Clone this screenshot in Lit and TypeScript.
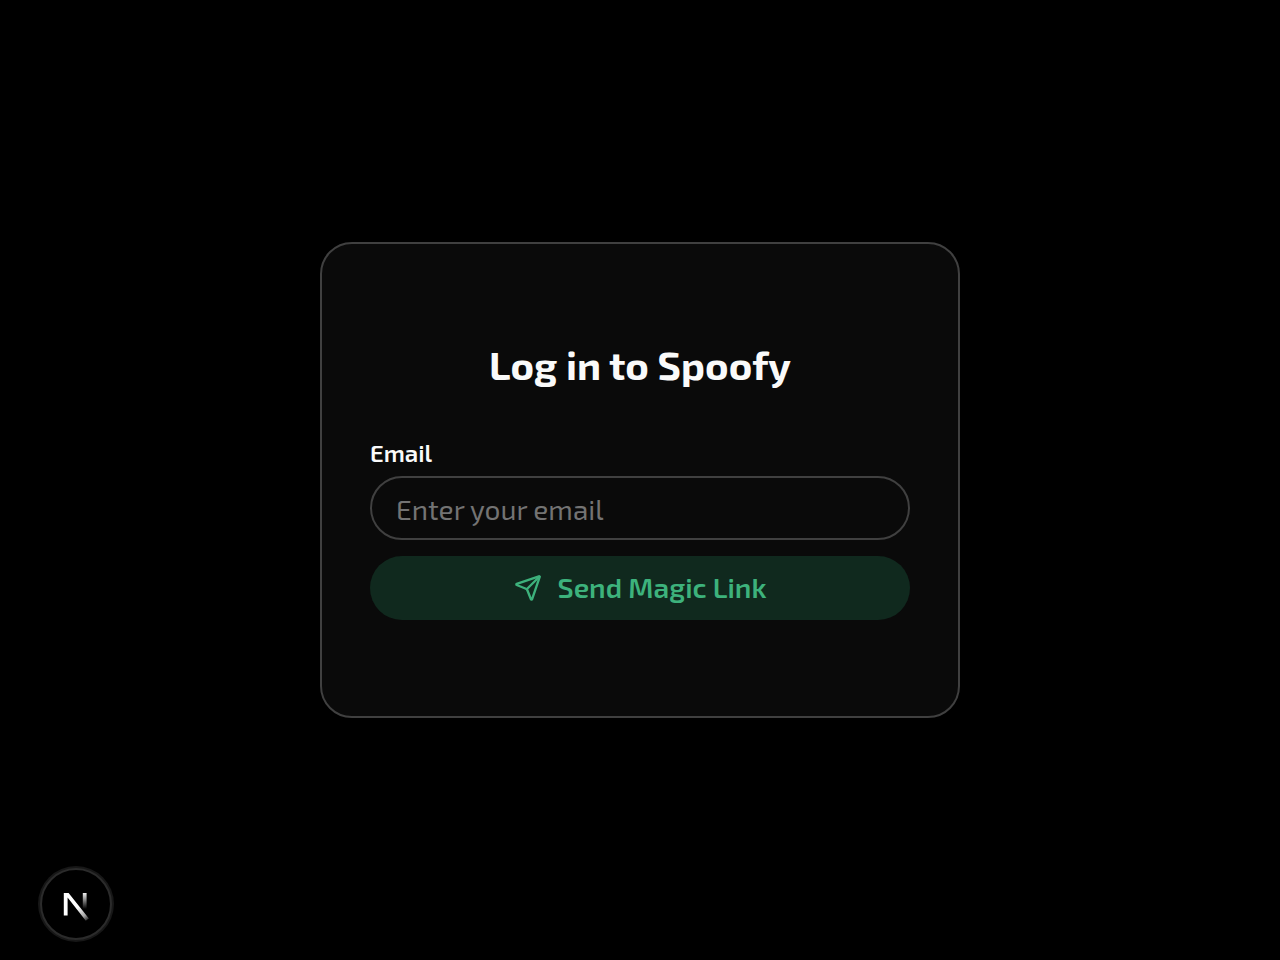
import { LitElement, html, css } from "lit";
import { customElement } from "lit/decorators.js";

@customElement("app-root")
export class AppRoot extends LitElement {
  static styles = css`
    :host {
      display: flex;
      align-items: center;
      justify-content: center;
      min-height: 100vh;
      background: #000;
      color: #fafafa;
      font-family: "Exo 2", "Noto Sans", sans-serif;
    }
    * {
      box-sizing: border-box;
    }
    .card {
      width: 100%;
      max-width: 640px;
      padding: 96px 48px;
      border: 2px solid #404040;
      border-radius: 32px;
      background: #0a0a0a;
    }
    .title {
      margin: 0 0 52px;
      font-size: 40px;
      line-height: 48px;
      font-weight: 700;
      text-align: center;
    }
    .form {
      display: flex;
      flex-direction: column;
      gap: 16px;
    }
    .field {
      display: flex;
      flex-direction: column;
      gap: 10px;
    }
    .label {
      font-size: 24px;
      line-height: 26px;
      font-weight: 600;
    }
    .input,
    .submit {
      width: 100%;
      height: 64px;
      border-radius: 32px;
      font-family: inherit;
      font-size: 28px;
    }
    .input {
      padding: 2px 24px 0;
      border: 2px solid #404040;
      background: transparent;
      color: #fafafa;
    }
    .input::placeholder {
      color: #737373;
      opacity: 1;
    }
    .submit {
      display: flex;
      align-items: center;
      justify-content: center;
      gap: 16px;
      padding: 0 24px;
      border: 0;
      background: #10291e;
      color: #3db27c;
      font-weight: 600;
      line-height: 32px;
      cursor: pointer;
    }
    .submit-text {
      padding-bottom: 2px;
    }
    .send {
      width: 28px;
      height: 28px;
    }
    .badge {
      position: fixed;
      left: 40px;
      bottom: 20px;
      width: 72px;
      height: 72px;
      padding: 0;
      border: 2px solid #2b2b2b;
      border-radius: 50%;
      background: #000;
      box-shadow: 0 0 0 2px #171717;
      cursor: pointer;
    }
    .mark {
      display: block;
      width: 68px;
      height: 68px;
    }
  `;

  render() {
    return html`
      <main class="card">
        <h1 class="title">Log in to Spoofy</h1>
        <form class="form" @submit=${(e: Event) => e.preventDefault()}>
          <div class="field">
            <label class="label" for="email">Email</label>
            <input class="input" id="email" type="email" placeholder="Enter your email" />
          </div>
          <button class="submit" type="submit">
            <svg class="send" viewBox="0 0 24 24" fill="none" stroke="currentColor" stroke-width="2" stroke-linecap="round" stroke-linejoin="round" aria-hidden="true">
              <path d="M14.536 21.686a.5.5 0 0 0 .937-.024l6.5-19a.496.496 0 0 0-.635-.635l-19 6.5a.5.5 0 0 0-.024.937l7.93 3.18a2 2 0 0 1 1.112 1.11z" />
              <path d="m21.854 2.147-10.94 10.939" />
            </svg>
            <span class="submit-text">Send Magic Link</span>
          </button>
        </form>
      </main>
      <button class="badge" type="button" aria-label="Open developer tools">
        <svg class="mark" viewBox="0 0 68 68" fill="none" aria-hidden="true">
          <defs>
            <linearGradient id="diagonal" x1="35" y1="38" x2="46" y2="52" gradientUnits="userSpaceOnUse">
              <stop stop-color="#fff" />
              <stop offset="0.6" stop-color="#fff" stop-opacity="0.65" />
              <stop offset="1" stop-color="#fff" stop-opacity="0" />
            </linearGradient>
            <linearGradient id="stem" x1="43" y1="22" x2="43" y2="39" gradientUnits="userSpaceOnUse">
              <stop stop-color="#fff" />
              <stop offset="1" stop-color="#fff" stop-opacity="0" />
            </linearGradient>
          </defs>
          <path d="M21.8 23H26.6L46.9 48.4L43.8 50.8L25.6 27.6V45.4H21.8Z" fill="url(#diagonal)" />
          <path d="M40.8 23H44.6V39H40.8Z" fill="url(#stem)" />
        </svg>
      </button>
    `;
  }
}
